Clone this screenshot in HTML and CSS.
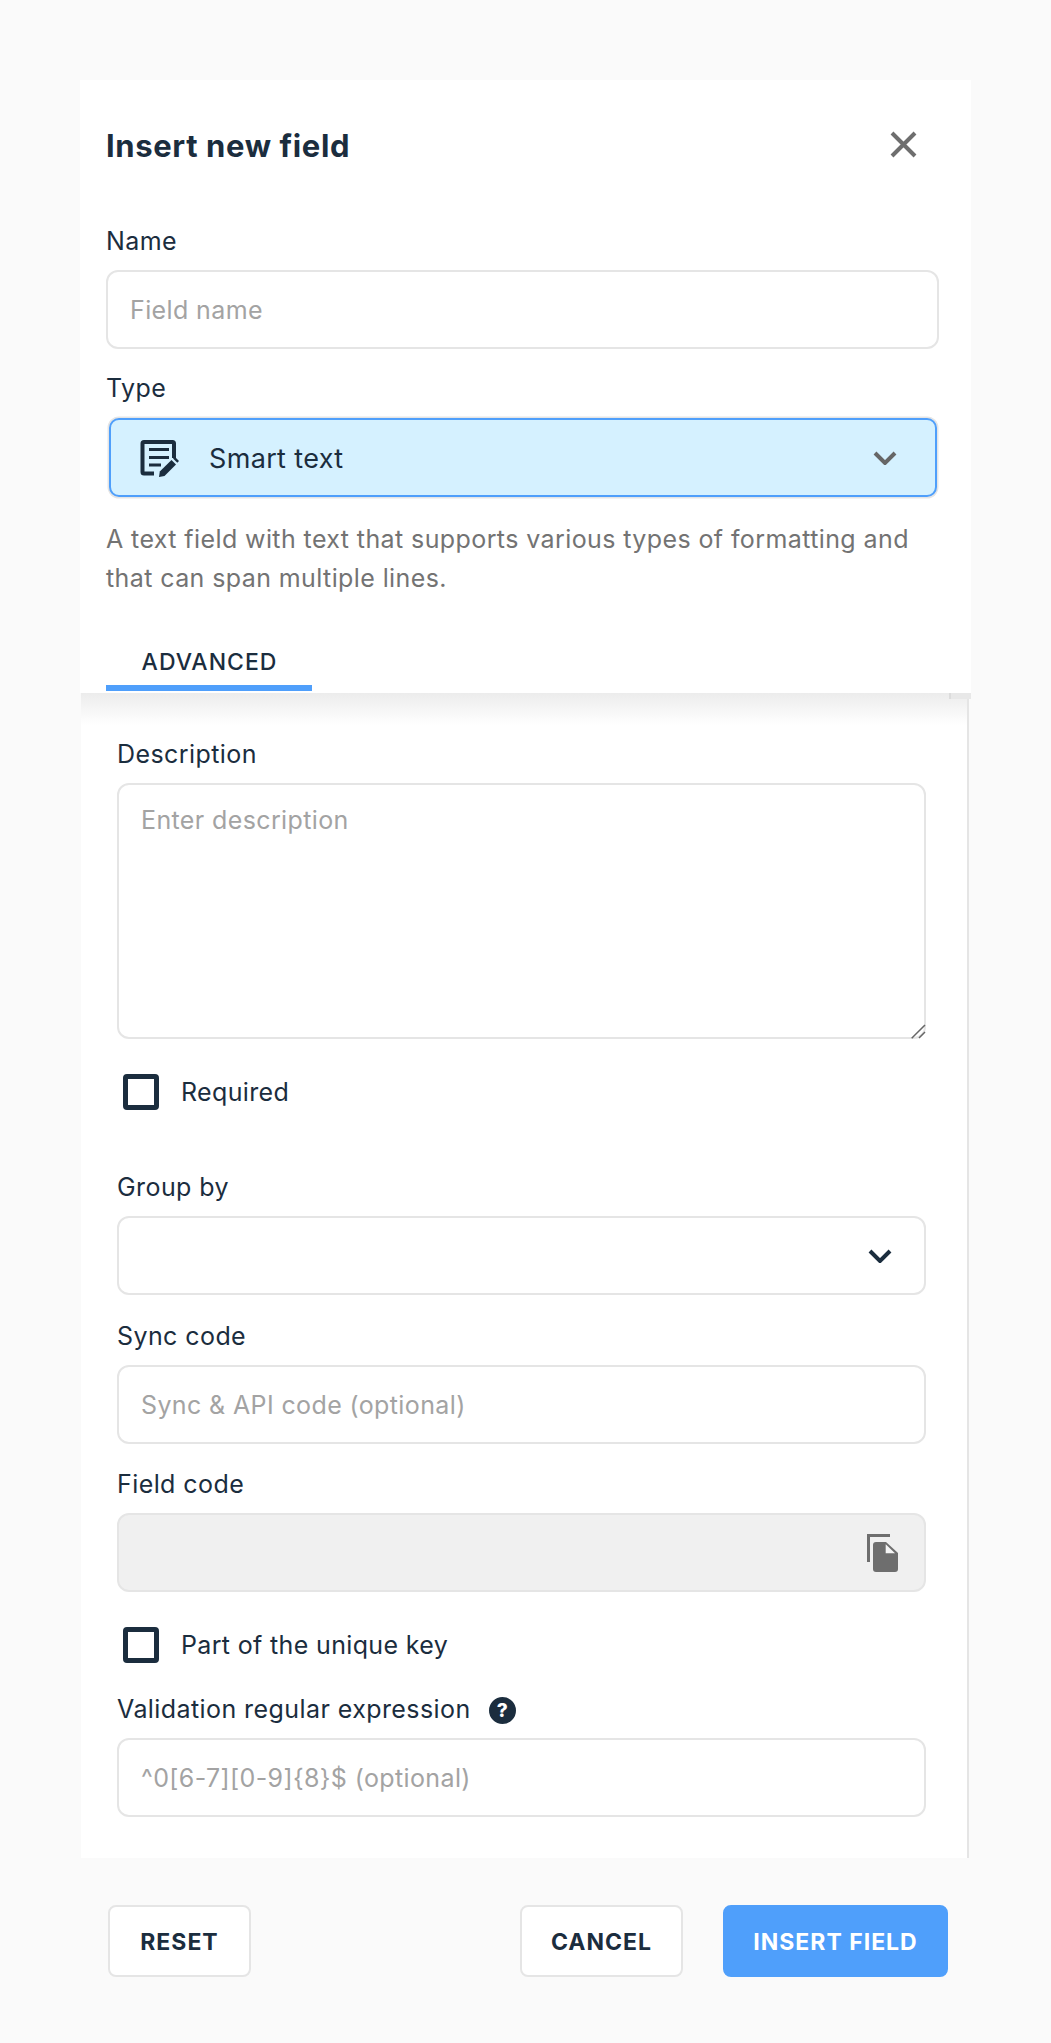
FILE: index.html
```html
<!DOCTYPE html>
<html lang="en">
<head>
<meta charset="utf-8">
<title>Insert new field</title>
<link rel="stylesheet" href="styles.css">
</head>
<body>
<div class="page">
  <div class="modal">
    <div class="head">
      <div class="title-row">
        <h1 class="title">Insert new field</h1>
        <svg class="close" viewBox="0 0 27 27" width="27" height="27"><path d="M2 2 25 25M25 2 2 25"/></svg>
      </div>
      <label class="label label-name">Name</label>
      <input class="input" type="text" placeholder="Field name">
      <label class="label label-next">Type</label>
      <div class="type-select">
        <svg class="type-icon" viewBox="38 6 44 44" width="44" height="44">
          <path class="doc" d="M75 28V13.500a1.500 1.500 0 0 0-1.500-1.500H45a1.500 1.500 0 0 0-1.500 1.500V42a1.500 1.500 0 0 0 1.500 1.500H55"/>
          <path class="doc-line" d="M50 19.500H70M50 27.500H70M50 35H62"/>
          <path class="pen" d="M60 47 60.800 41.500 72.500 30 77 34.500 65.500 46Z"/>
          <path class="pen-top" d="M74 28.500 75.800 26.800 80 31 78.300 32.700Z"/>
        </svg>
        <span class="type-name">Smart text</span>
        <svg class="chev chev-grey" viewBox="0 0 24 14" width="24" height="14"><path d="M2 2 12 12 22 2"/></svg>
      </div>
      <p class="help">A text field with text that supports various types of formatting and that can span multiple lines.</p>
      <div class="tabs"><div class="tab">ADVANCED</div></div>
    </div>
    <div class="scroll-stub"></div>
    <div class="body">
      <label class="label">Description</label>
      <div class="area-wrap">
        <textarea class="input area" placeholder="Enter description"></textarea>
        <svg class="grip" viewBox="0 0 16 16" width="16" height="16"><path d="M1.700 15.300 15 2M9 15 15 9"/></svg>
      </div>
      <div class="check-row check-first"><span class="check"></span><span class="check-label">Required</span></div>
      <label class="label label-group">Group by</label>
      <div class="input select-box">
        <svg class="chev chev-dark" viewBox="0 0 24 14" width="24" height="14"><path d="M2 2 12 12 22 2"/></svg>
      </div>
      <label class="label label-sync">Sync code</label>
      <input class="input" type="text" placeholder="Sync &amp; API code (optional)">
      <label class="label label-code">Field code</label>
      <div class="input disabled-box">
        <svg class="copy" viewBox="0 0 34 40" width="34" height="40">
          <path class="copy-back" d="M2.500 29V2.500H24"/>
          <path class="copy-front" d="M7 12a3 3 0 0 1 3-3H20L32 20V36a3 3 0 0 1-3 3H10a3 3 0 0 1-3-3Z"/>
          <path class="copy-fold" d="M19.700 11.300 29 20.300H19.700Z"/>
        </svg>
      </div>
      <div class="check-row check-second"><span class="check"></span><span class="check-label">Part of the unique key</span></div>
      <div class="label label-help"><span>Validation regular expression</span><span class="help-dot">?</span></div>
      <input class="input" type="text" placeholder="^0[6-7][0-9]{8}$ (optional)">
    </div>
    <div class="footer">
      <button class="btn btn-reset">RESET</button>
      <div class="footer-right">
        <button class="btn btn-cancel">CANCEL</button>
        <button class="btn btn-primary">INSERT FIELD</button>
      </div>
    </div>
  </div>
</div>
</body>
</html>
```
FILE: styles.css
```css
* { box-sizing: border-box; }
html, body { margin: 0; padding: 0; }
body {
  background: #fafafa;
  font-family: Inter, "Liberation Sans", sans-serif;
  color: #1b2d3e;
}
.page { width: 1051px; height: 2043px; padding: 80px 80px 0; overflow: hidden; }
.modal { position: relative; width: 891px; }
.head { position: relative; z-index: 1; background: #fff; padding: 0 32px 0 26px; height: 613px; }
.title-row { display: flex; justify-content: space-between; align-items: center; padding: 45px 22px 0 0; height: 85px; }
.title { margin: 2px 0 0; font-size: 31px; font-weight: 700; line-height: 40px; letter-spacing: 0.62px; color: #1b2d3e; }
.close { fill: none; stroke: #6e6e6e; stroke-width: 4; margin-top: -2px; }
.label { display: block; height: 28px; font-size: 25px; line-height: 28px; letter-spacing: 0.42px; color: #1b2d3e; }
.label-name { margin-top: 62px; }
.label-next { margin-top: 25px; }
.input {
  display: block; width: 100%; height: 79px; margin-top: 15px; padding: 0 22px;
  border: 2px solid #e5e5e5; border-radius: 12px; background: #fff;
  font: 400 25px/30px Inter, "Liberation Sans", sans-serif; letter-spacing: 0.38px; color: #1b2d3e; outline: none;
}
.input::placeholder { color: #a3a3a3; opacity: 1; }
.area-wrap { position: relative; }
.area { height: 256px; padding-top: 20px; resize: none; }
.grip { position: absolute; right: 0; bottom: 0; fill: none; stroke: #666; stroke-width: 1.5; }
.type-select {
  display: flex; align-items: center; height: 79px; margin: 16px 2px 2px 3px; padding: 0 38px 0 26px;
  background: #d5f1ff; border: 2px solid #4f9ffb; border-radius: 10px; box-shadow: 0 0 0 1.5px #e5e5e5;
}
.type-name { margin: 2px 0 0 28px; font-size: 27px; letter-spacing: 0.35px; color: #1b2d3e; flex: 1; }
.type-icon { flex: none; }
.doc { fill: none; stroke: #1b2d3e; stroke-width: 4; }
.doc-line { fill: none; stroke: #1b2d3e; stroke-width: 3; }
.pen, .pen-top { fill: #1b2d3e; }
.chev { fill: none; stroke-width: 4; flex: none; }
.chev-grey { stroke: #666; }
.chev-dark { stroke: #1b2d3e; }
.help { margin: 23px 0 0; font-size: 25px; line-height: 39px; letter-spacing: 0.4px; color: #737373; }
.tabs { margin-top: 32px; }
.tab {
  width: 206px; height: 61px; padding: 8px 0 0 1px; display: flex; align-items: center; justify-content: center;
  border-bottom: 6px solid #4f9ffb; font-size: 23px; font-weight: 500; letter-spacing: 1px; color: #1b2d3e;
}
.scroll-stub { position: absolute; z-index: 2; top: 613px; right: 0; width: 22px; height: 6px; background: #e8e8e8; border-left: 2px solid #dcdcdc; }
.body {
  position: relative; margin-left: 1px; width: 888px; padding: 47px 41px 41px 36px;
  background: linear-gradient(#ececec, #fff 32px); border-right: 2px solid #e5e5e5;
}
.check-row { display: flex; align-items: center; margin-left: 6px; height: 36px; }
.check-first { margin-top: 35px; }
.check-second { margin-top: 35px; }
.check { width: 36px; height: 36px; border: 5px solid #1b2d3e; border-radius: 4px; flex: none; background: #fff; }
.check-label { margin-left: 22px; font-size: 25px; letter-spacing: 0.35px; color: #1b2d3e; }
.label-group { margin-top: 63px; }
.label-sync { margin-top: 27px; }
.label-code { margin-top: 26px; }
.select-box { display: flex; align-items: center; justify-content: flex-end; padding: 0 32px 0 0; }
.disabled-box { display: flex; align-items: center; justify-content: flex-end; padding: 0 24px 0 0; background: #f0f0f0; }
.copy-back { fill: none; stroke: #6e6e6e; stroke-width: 3; }
.copy-front { fill: #6e6e6e; }
.copy-fold { fill: #f5f5f5; }
.label-help { display: flex; align-items: center; margin-top: 32px; }
.help-dot {
  display: flex; align-items: center; justify-content: center; width: 27px; height: 27px; margin: 3px 0 0 18px;
  border-radius: 50%; background: #1b2d3e; color: #fff; font-size: 19px; line-height: 27px; font-weight: 800; letter-spacing: 0;
}
.footer { display: flex; justify-content: space-between; margin-top: 47px; padding: 0 23px 0 28px; }
.footer-right { display: flex; gap: 40px; }
.btn {
  height: 72px; border: 2px solid #e5e5e5; border-radius: 8px; background: #fff; padding: 2px 0 0;
  font: 700 23px/28px Inter, "Liberation Sans", sans-serif; letter-spacing: 1px; color: #1b2d3e;
}
.btn-reset { width: 143px; }
.btn-cancel { width: 163px; }
.btn-primary { width: 225px; background: #4f9ffb; border-color: #4f9ffb; color: #fff; }
```
